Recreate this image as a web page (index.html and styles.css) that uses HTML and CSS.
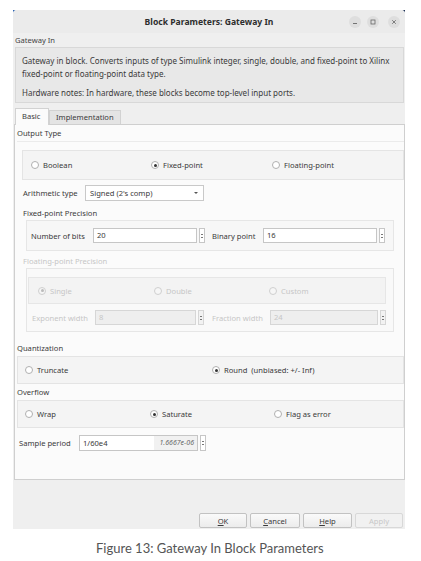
FILE: index.html
```html
<!DOCTYPE html>
<html lang="en">
<head>
    <meta charset="UTF-8">
    <title>Block Parameters: Gateway In</title>
    <link rel="stylesheet" href="styles.css">
</head>
<body>

    <div class="frame">
        <div class="window">
            <div class="titlebar">
                <span></span>
                <span class="title">Block Parameters: Gateway In</span>
                <div class="controls">
                    <span class="ctl"><svg width="6" height="6" viewBox="0 0 6 6"><path d="M1 4.5h4" stroke="#666" stroke-width="0.9"/></svg></span>
                    <span class="ctl"><svg width="6" height="6" viewBox="0 0 6 6"><rect x="1" y="1" width="4" height="4" fill="none" stroke="#666" stroke-width="0.8"/></svg></span>
                    <span class="ctl ctl-close"><svg width="6" height="6" viewBox="0 0 6 6"><path d="M1.2 1.2l3.6 3.6M4.8 1.2l-3.6 3.6" stroke="#666" stroke-width="0.8"/></svg></span>
                </div>
            </div>

            <div class="block-name">Gateway In</div>
            <div class="desc">
                <p>Gateway in block. Converts inputs of type Simulink integer, single, double, and fixed-point to Xilinx<br>fixed-point or floating-point data type.</p>
                <p>Hardware notes: In hardware, these blocks become top-level input ports.</p>
            </div>

            <div class="tabs">
                <span class="tab active">Basic</span>
                <span class="tab">Implementation</span>
            </div>

            <div class="panel">
                <div class="section-title">Output Type</div>
                <div class="section-body">
                    <div class="radio-box cols-output">
                        <label class="radio"><span class="dot"></span>Boolean</label>
                        <label class="radio checked"><span class="dot"></span>Fixed-point</label>
                        <label class="radio"><span class="dot"></span>Floating-point</label>
                    </div>

                    <div class="field-row arith">
                        <span class="lbl">Arithmetic type</span>
                        <span class="combo">Signed (2's comp)<span class="arrow"></span></span>
                    </div>

                    <div class="sub-title">Fixed-point Precision</div>
                    <div class="group">
                        <div class="field-row">
                            <span class="lbl w-bits">Number of bits</span>
                            <span class="input w-104">20</span>
                            <span class="spin"></span>
                            <span class="lbl w-binary">Binary point</span>
                            <span class="input w-114">16</span>
                            <span class="spin"></span>
                        </div>
                    </div>

                    <div class="sub-title disabled">Floating-point Precision</div>
                    <div class="group float-group disabled">
                        <div class="radio-box cols-float">
                            <label class="radio checked"><span class="dot"></span>Single</label>
                            <label class="radio"><span class="dot"></span>Double</label>
                            <label class="radio"><span class="dot"></span>Custom</label>
                        </div>
                        <div class="field-row float-row">
                            <span class="lbl w-exp">Exponent width</span>
                            <span class="input w-101">8</span>
                            <span class="spin"></span>
                            <span class="lbl w-frac">Fraction width</span>
                            <span class="input w-108">24</span>
                            <span class="spin"></span>
                        </div>
                    </div>
                </div>

                <div class="section-title">Quantization</div>
                <div class="radio-box wide cols-quant">
                    <label class="radio"><span class="dot"></span>Truncate</label>
                    <label class="radio checked"><span class="dot"></span>Round&nbsp; (unbiased: +/- Inf)</label>
                </div>

                <div class="section-title">Overflow</div>
                <div class="radio-box wide cols-overflow">
                    <label class="radio"><span class="dot"></span>Wrap</label>
                    <label class="radio checked"><span class="dot"></span>Saturate</label>
                    <label class="radio"><span class="dot"></span>Flag as error</label>
                </div>

                <div class="field-row sample">
                    <span class="lbl w-sample">Sample period</span>
                    <span class="input w-119 sample-input">1/60e4<span class="evaluated">1.6667e-06</span></span>
                    <span class="spin"></span>
                </div>
            </div>

            <div class="buttons">
                <button class="btn w-48"><u>O</u>K</button>
                <button class="btn w-50"><u>C</u>ancel</button>
                <button class="btn w-49"><u>H</u>elp</button>
                <button class="btn w-48" disabled>Apply</button>
            </div>
        </div>
    </div>

    <p class="caption">Figure 13: Gateway In Block Parameters</p>

</body>
</html>
```

FILE: styles.css
```css
body {
    font-family: 'Noto Sans', 'DejaVu Sans', sans-serif;
    margin: 0;
    padding: 0;
    background-color: #fff;
    color: #3a3a3a;
}

.frame {
    margin: 10px 0 0 13px;
    width: 392px;
    background:
        linear-gradient(#2f66b3, #2f66b3) left top / 3px 3px no-repeat,
        linear-gradient(#1b2f55, #1b2f55) right top / 3px 3px no-repeat;
}

.window {
    height: 519px;
    background-color: #efefef;
    border-radius: 4px 4px 0 0;
    display: flex;
    flex-direction: column;
    font-size: 7.6px;
}

/* barre de titre */
.titlebar {
    height: 23px;
    display: grid;
    grid-template-columns: 1fr auto 1fr;
    align-items: center;
    background-color: #ebebeb;
    border-radius: 4px 4px 0 0;
}

.title {
    font-weight: 700;
    font-size: 8.6px;
    color: #2e2e2e;
}

.controls {
    justify-self: end;
    display: flex;
    align-items: center;
    gap: 6px;
    padding-right: 5px;
}

.ctl {
    width: 12px;
    height: 12px;
    border-radius: 50%;
    background-color: #dedede;
    display: flex;
    align-items: center;
    justify-content: center;
}

.ctl-close {
    margin-left: 3px;
}

.block-name {
    height: 14px;
    line-height: 14px;
    padding-left: 2px;
    color: #444;
}

.desc {
    box-sizing: border-box;
    height: 56px;
    margin: 0 1px 0 2px;
    padding: 6px 6px 0;
    background-color: #e8e8e8;
    border: 1px solid #d8d8d8;
    font-size: 8px;
}

.desc p {
    margin: 0 0 6px;
    line-height: 13px;
    white-space: nowrap;
}

/* onglets */
.tabs {
    display: flex;
    align-items: flex-end;
    margin: 5px 0 0 2px;
    height: 16px;
}

.tab {
    box-sizing: border-box;
    height: 14px;
    line-height: 13px;
    padding: 0 6px;
    border: 1px solid #d2d2d2;
    border-bottom: none;
    background-color: #e4e4e4;
}

.tab.active {
    height: 17px;
    line-height: 15px;
    background-color: #fbfbfb;
    width: 34px;
    margin-bottom: -1px;
    position: relative;
}

.panel {
    box-sizing: border-box;
    height: 356px;
    margin-left: 1px;
    width: 391px;
    background-color: #fbfbfb;
    border: 1px solid #cfcfcf;
    padding-left: 2px;
}

.section-title {
    line-height: 14px;
    height: 14px;
    padding-top: 1px;
}

.section-body {
    margin-top: 1px;
    border-top: 1px solid #ebebeb;
    padding: 8px 0 8px 5px;
}

.radio-box {
    box-sizing: border-box;
    display: grid;
    align-items: center;
    background-color: #f4f4f4;
    border: 1px solid #e4e4e4;
}

.cols-output {
    height: 30px;
    grid-template-columns: 120px 121px 1fr;
    padding-left: 8px;
}

.cols-float {
    height: 27px;
    grid-template-columns: 116px 115px 1fr;
    padding-left: 9px;
}

.radio-box.wide {
    height: 28px;
    padding-left: 7px;
    margin-top: 1px;
}

.cols-quant {
    grid-template-columns: 187px 1fr;
}

.cols-overflow {
    grid-template-columns: 125px 124px 1fr;
}

.radio {
    display: flex;
    align-items: center;
    gap: 4px;
}

.dot {
    box-sizing: border-box;
    width: 8px;
    height: 8px;
    border-radius: 50%;
    border: 1px solid #b0b0b0;
    background-color: #fff;
    display: flex;
    align-items: center;
    justify-content: center;
}

.radio.checked .dot::after {
    content: "";
    width: 3px;
    height: 3px;
    border-radius: 50%;
    background-color: #333;
}

.field-row {
    display: flex;
    align-items: center;
}

.arith {
    margin-top: 5px;
    padding-left: 1px;
}

.lbl {
    flex: none;
}

.arith .lbl {
    width: 62px;
}

.combo {
    box-sizing: border-box;
    width: 119px;
    height: 16px;
    line-height: 14px;
    padding-left: 4px;
    border: 1px solid #c9c9c9;
    background-color: #fff;
    display: flex;
    justify-content: space-between;
    align-items: center;
}

.arrow {
    width: 0;
    height: 0;
    margin-right: 5px;
    border-left: 2.5px solid transparent;
    border-right: 2.5px solid transparent;
    border-top: 2.5px solid #555;
}

.sub-title {
    margin-top: 5px;
    line-height: 14px;
    padding-left: 1px;
}

.sub-title.disabled {
    margin-top: 3px;
}

.disabled,
.disabled .lbl,
.disabled .radio {
    color: #c6c6c6;
}

.group {
    box-sizing: border-box;
    width: 368px;
    margin-left: 4px;
    border: 1px solid #e6e6e6;
    background-color: #f7f7f7;
    padding: 7px 0 7px 4px;
}

.float-group {
    height: 64px;
    padding: 8px 7px 0 1px;
    background-color: #f9f9f9;
}

.float-group .radio-box {
    background-color: #f3f3f3;
    border-color: #e6e6e6;
}

.float-group .dot {
    border-color: #cfcfcf;
    background-color: #f6f6f6;
}

.float-group .radio.checked .dot::after {
    background-color: #bbb;
}

.float-row {
    margin-top: 6px;
    padding-left: 4px;
}

.input {
    box-sizing: border-box;
    height: 15px;
    line-height: 13px;
    padding-left: 3px;
    border: 1px solid #c6c6c6;
    background-color: #fff;
}

.float-group .input {
    background-color: #eeeeee;
    border-color: #d6d6d6;
    color: #c6c6c6;
}

.spin {
    box-sizing: border-box;
    width: 6px;
    height: 15px;
    margin-left: 2px;
    border: 1px solid #c6c6c6;
    background:
        radial-gradient(circle, #777 0.6px, transparent 0.9px) center 4px / 4px 3px no-repeat,
        radial-gradient(circle, #777 0.6px, transparent 0.9px) center 7px / 4px 3px no-repeat,
        #fff;
}

.float-group .spin {
    border-color: #d6d6d6;
    background-color: #f2f2f2;
}

.w-bits { width: 62px; }
.w-binary { width: 51px; margin-left: 7px; }
.w-exp { width: 63px; }
.w-frac { width: 58px; margin-left: 8px; }
.w-sample { width: 60px; }

.w-101 { width: 101px; }
.w-104 { width: 104px; }
.w-108 { width: 108px; }
.w-114 { width: 114px; }
.w-119 { width: 119px; }

.sample {
    margin-top: 7px;
    padding-left: 2px;
}

.sample .input {
    height: 16px;
    line-height: 14px;
    display: flex;
    justify-content: space-between;
    padding-right: 0;
}

.evaluated {
    font-style: italic;
    color: #666;
    background-color: #f1f1f1;
    padding: 0 3px 0 6px;
    font-size: 7px;
}

.sample .spin {
    height: 16px;
}

/* boutons du bas */
.buttons {
    margin-top: auto;
    margin-bottom: 1px;
    display: flex;
    justify-content: flex-end;
    gap: 3px;
    padding-right: 2px;
}

.btn {
    font-family: inherit;
    font-size: 7.6px;
    height: 15px;
    padding: 0;
    color: #3a3a3a;
    border: 1px solid #c2c2c2;
    border-radius: 2px;
    background: linear-gradient(#fafafa, #ececec);
}

.btn:disabled {
    color: #c8c8c8;
    border-color: #d8d8d8;
    background: #f1f1f1;
}

.w-48 { width: 48px; }
.w-49 { width: 49px; }
.w-50 { width: 50px; }

.caption {
    margin: 11px 0 0;
    padding-left: 96px;
    font-family: 'Lato', sans-serif;
    font-size: 13px;
    color: #555;
}
```
